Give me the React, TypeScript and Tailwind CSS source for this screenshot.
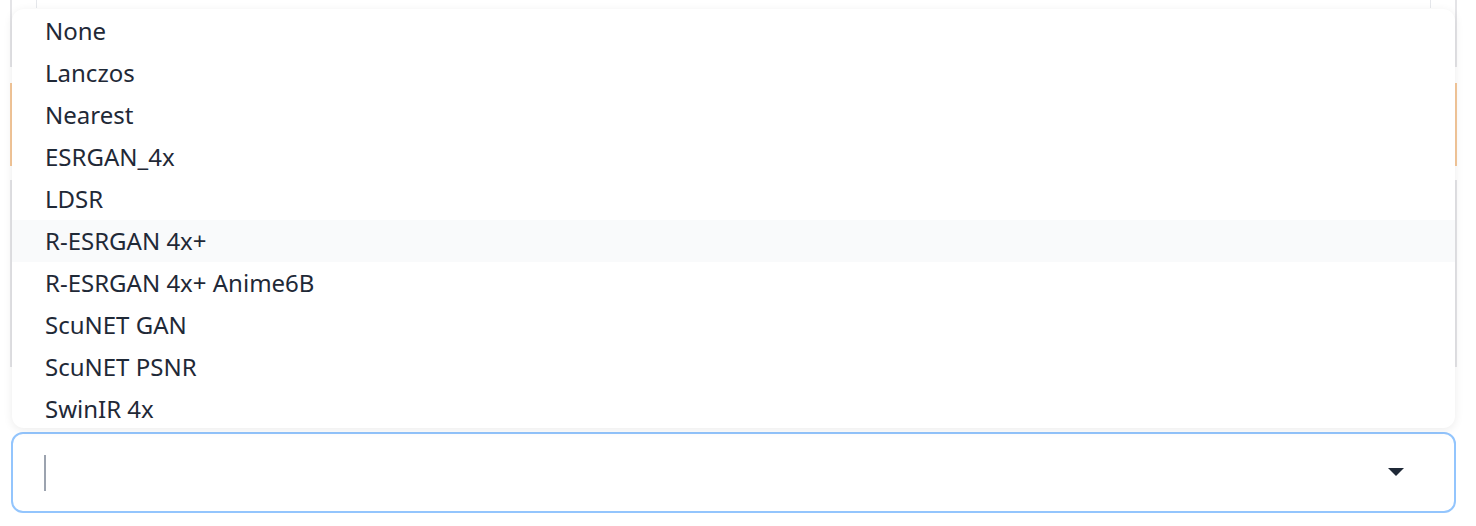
import React from "react";

const items = [
  "None",
  "Lanczos",
  "Nearest",
  "ESRGAN_4x",
  "LDSR",
  "R-ESRGAN 4x+",
  "R-ESRGAN 4x+ Anime6B",
  "ScuNET GAN",
  "ScuNET PSNR",
  "SwinIR 4x",
];

export default function App() {
  return (
    <div
      className="relative w-[1476px] h-[526px] overflow-hidden bg-white"
      style={{ fontFamily: '"Noto Sans", "Open Sans", sans-serif' }}
    >
      <div className="flex flex-col ml-[10px] w-[1447px]">
        <div className="h-[67px] border-x-2 border-[#e4e4e7] px-[24px]">
          <div className="h-[8px] border-x border-[#e5e7eb]" />
        </div>
        <div className="mt-[16px] h-[83px] border-x-2 border-[#f5c89a]" />
        <div className="mt-[14px] h-[187px] border-x-2 border-[#e4e4e7]" />
        <div className="mt-[65px] ml-[1px] w-[1445px] h-[81px] rounded-[12px] border-2 border-[#93c5fd] bg-white flex items-center pl-[31px] pr-[50px]">
          <div className="w-[2px] h-[36px] bg-[#9ca3af]" />
          <div className="flex-1" />
          <svg width="16" height="9" viewBox="0 0 16 9">
            <path d="M0 0 L16 0 L8 8 Z" fill="#1f2937" />
          </svg>
        </div>
      </div>

      <div className="absolute left-[12px] top-[9px] w-[1443px] h-[419px] overflow-hidden rounded-[12px] bg-white shadow-[0_2px_10px_rgba(0,0,0,0.08)]">
        <ul className="pt-[1px]">
          {items.map((it) => (
            <li
              key={it}
              className={`h-[42px] flex items-center pl-[33px] text-[24px] text-[#1f2937] ${
                it === "R-ESRGAN 4x+" ? "bg-[#f9fafb]" : ""
              }`}
            >
              {it}
            </li>
          ))}
        </ul>
      </div>
    </div>
  );
}
